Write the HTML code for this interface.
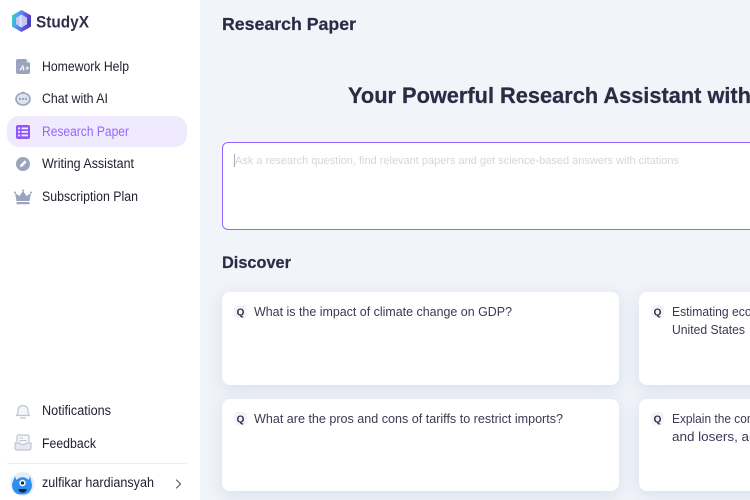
<!DOCTYPE html>
<html lang="en">
<head>
<meta charset="utf-8">
<title>StudyX Research Paper</title>
<style>
html,body{margin:0;padding:0;width:750px;height:500px;overflow:hidden;background:#f1f4f9}
body{position:relative;font-family:"Liberation Sans",sans-serif}
.side{position:absolute;left:0;top:0;width:200px;height:500px;background:#fff}
.pill{position:absolute;left:7px;top:116px;width:180px;height:31px;border-radius:12px;background:#efeafe}
.hr{position:absolute;left:7px;top:463px;width:180px;height:1px;background:#eeeeee}
.input{position:absolute;left:222px;top:142px;width:600px;height:86px;background:#fff;border:1px solid #9466ff;border-radius:6px}
.caret{position:absolute;left:234px;top:154px;width:1px;height:13px;background:#aaa}
.card{position:absolute;background:#fff;border-radius:8px;box-shadow:0 4px 16px rgba(180,192,215,.42)}
.chip{position:absolute;width:13px;height:13px;border-radius:4px;background:#f1f4f9}
svg.over{position:absolute;left:0;top:0}
</style>
</head>
<body>
<div class="side"></div>
<div class="pill"></div>
<div class="hr"></div>
<div class="input"></div>
<div class="caret"></div>
<div class="card" style="left:222px;top:292px;width:397px;height:93px"></div>
<div class="card" style="left:639px;top:292px;width:397px;height:93px"></div>
<div class="card" style="left:222px;top:399px;width:397px;height:92px"></div>
<div class="card" style="left:639px;top:399px;width:397px;height:92px"></div>
<div class="chip" style="left:234px;top:305px"></div>
<div class="chip" style="left:651px;top:305px"></div>
<div class="chip" style="left:234px;top:412px"></div>
<div class="chip" style="left:651px;top:412px"></div>

<svg class="over" width="750" height="500" viewBox="0 0 750 500" xmlns="http://www.w3.org/2000/svg" font-family="Liberation Sans, sans-serif">
<defs>
<linearGradient id="lg" x1="0" y1="0" x2="1" y2="0.3">
<stop offset="0" stop-color="#35e0b8"/><stop offset=".35" stop-color="#4aa4f0"/><stop offset=".7" stop-color="#6a5ce8"/><stop offset="1" stop-color="#4a3fc0"/>
</linearGradient>
</defs>

<!-- logo -->
<path d="M21.500 10l9.500 5.400v11.200l-9.500 5.400-9.500-5.400V15.400z" fill="url(#lg)"/>
<path d="M21.500 14.500l5.500 3.200v6.600l-5.500 3.200-5.500-3.200v-6.600z" fill="#c3c8f6"/>
<path d="M21.500 14.500v13l-2-1.200V15.700z" fill="#dfe3ff"/>
<text x="36" y="27.500" font-size="17" font-weight="700" fill="#2f2f4a" textLength="53" lengthAdjust="spacingAndGlyphs">StudyX</text>

<!-- Homework Help icon -->
<path d="M18 59h8l4 4v9a2 2 0 0 1-2 2H18a2 2 0 0 1-2-2V61a2 2 0 0 1 2-2z" fill="#9aa5bd"/>
<path d="M26.500 59l3.500 3.500h-3.500z" fill="#dfe3ec"/>
<text x="19.500" y="70.500" font-size="7.500" font-weight="700" font-style="italic" fill="#fff">A+</text>

<!-- Chat icon -->
<ellipse cx="23" cy="99" rx="7" ry="6" fill="#dde2ec" stroke="#9aa5bd" stroke-width="1.600"/>
<path d="M21.500 92.500h3" stroke="#9aa5bd" stroke-width="1.500"/>
<circle cx="20" cy="99" r="1" fill="#8a95ad"/><circle cx="23" cy="99" r="1" fill="#8a95ad"/><circle cx="26" cy="99" r="1" fill="#8a95ad"/>

<!-- Research icon -->
<rect x="16" y="125" width="14" height="14" rx="2" fill="#9155f7"/>
<g fill="#efeafe">
<rect x="18" y="127.500" width="2" height="1.800"/><rect x="21.500" y="127.500" width="6.500" height="1.800"/>
<rect x="18" y="131" width="2" height="1.800"/><rect x="21.500" y="131" width="6.500" height="1.800"/>
<rect x="18" y="134.500" width="2" height="1.800"/><rect x="21.500" y="134.500" width="6.500" height="1.800"/>
</g>

<!-- Writing icon -->
<circle cx="23" cy="164" r="7" fill="#9aa5bd"/>
<path d="M19.800 167.200l.7-2.600 4.200-4.200 1.900 1.900-4.200 4.200z" fill="#fff"/>

<!-- Crown icon -->
<path d="M15 193l4.500 3 3.500-5 3.500 5 4.500-3-1.500 8h-13z" fill="#9aa5bd"/>
<circle cx="15" cy="192.500" r="1" fill="#9aa5bd"/><circle cx="23" cy="190.500" r="1" fill="#9aa5bd"/><circle cx="31" cy="192.500" r="1" fill="#9aa5bd"/>
<rect x="16.500" y="202" width="13" height="2.200" rx=".6" fill="#9aa5bd"/>

<!-- Bell -->
<path d="M16.500 415.500c1.500-1.500 1.500-3 1.500-5a4.800 4.800 0 0 1 10 0c0 2 0 3.500 1.500 5z" fill="#f4f6fa" stroke="#bcc4d4" stroke-width="1.200" stroke-linejoin="round"/>
<path d="M20.500 418h5" stroke="#bcc4d4" stroke-width="1.300" stroke-linecap="round"/>

<!-- Feedback -->
<path d="M17 442v-5.500a1.500 1.500 0 0 1 1.500-1.500h9a1.500 1.500 0 0 1 1.500 1.500V442" fill="#f4f6fa" stroke="#bcc4d4" stroke-width="1.200"/>
<path d="M15 443h5l1 1.500h4l1-1.500h5v5a2 2 0 0 1-2 2H17a2 2 0 0 1-2-2z" fill="#e6e9f0" stroke="#bcc4d4" stroke-width="1.200" stroke-linejoin="round"/>
<path d="M19.500 438h3.500M19.500 440.500h7" stroke="#bcc4d4" stroke-width="1"/>

<!-- Avatar -->
<circle cx="22.500" cy="484" r="12" fill="#e3eef8"/>
<path d="M15 476.500l1.500 3.500a8 8 0 0 1 12 0l1.500-3.500 1.500 6a9.500 9.500 0 0 1-.8 7.500c-1.500 3-4 4.500-8.700 4.500s-7.200-1.500-8.700-4.500a9.500 9.500 0 0 1-.8-7.500z" fill="#2f8fef"/>
<circle cx="22.500" cy="483" r="3.200" fill="#fff"/>
<circle cx="22.500" cy="483" r="1.600" fill="#14243c"/>
<path d="M18.500 489h8c0 2.500-1.800 3.500-4 3.500s-4-1-4-3.500z" fill="#14243c"/>
<path d="M176.500 480l4 4-4 4" fill="none" stroke="#555a68" stroke-width="1.200" stroke-linecap="round" stroke-linejoin="round"/>

<!-- Sidebar text -->
<g font-size="13.500" fill="#1f1f2e">
<text x="42" y="71" textLength="87" lengthAdjust="spacingAndGlyphs">Homework Help</text>
<text x="42" y="103" textLength="66" lengthAdjust="spacingAndGlyphs">Chat with AI</text>
<text x="42" y="136" textLength="87" lengthAdjust="spacingAndGlyphs" fill="#9466ff">Research Paper</text>
<text x="42" y="168" textLength="92" lengthAdjust="spacingAndGlyphs">Writing Assistant</text>
<text x="42" y="201" textLength="96" lengthAdjust="spacingAndGlyphs">Subscription Plan</text>
<text x="42" y="415" textLength="69" lengthAdjust="spacingAndGlyphs">Notifications</text>
<text x="42" y="448" textLength="54" lengthAdjust="spacingAndGlyphs">Feedback</text>
<text x="42" y="487" textLength="112" lengthAdjust="spacingAndGlyphs">zulfikar hardiansyah</text>
</g>

<!-- Main text -->
<text x="222" y="30" font-size="17.500" font-weight="700" fill="#2b2b45" stroke="#2b2b45" stroke-width=".2" textLength="134" lengthAdjust="spacingAndGlyphs">Research Paper</text>
<text x="348" y="103" font-size="22.500" font-weight="700" fill="#2b2b45" stroke="#2b2b45" stroke-width=".25" textLength="403" lengthAdjust="spacingAndGlyphs">Your Powerful Research Assistant with</text>
<text x="235" y="164" font-size="11" fill="#d3d6de" textLength="444" lengthAdjust="spacingAndGlyphs">Ask a research question, find relevant papers and get science-based answers with citations</text>
<text x="222" y="268" font-size="16.500" font-weight="700" fill="#2b2b45" stroke="#2b2b45" stroke-width=".2" textLength="69" lengthAdjust="spacingAndGlyphs">Discover</text>

<!-- Q chips -->
<g font-size="10" font-weight="700" fill="#2b2b45" text-anchor="middle">
<text x="240.500" y="315.500">Q</text>
<text x="657.500" y="315.500">Q</text>
<text x="240.500" y="422.500">Q</text>
<text x="657.500" y="422.500">Q</text>
</g>

<!-- Card text -->
<g font-size="12.500" fill="#3a3a55">
<text x="254" y="316" textLength="258" lengthAdjust="spacingAndGlyphs">What is the impact of climate change on GDP?</text>
<text x="254" y="423" textLength="309" lengthAdjust="spacingAndGlyphs">What are the pros and cons of tariffs to restrict imports?</text>
<text x="672" y="316" textLength="112" lengthAdjust="spacingAndGlyphs">Estimating economic</text>
<text x="672" y="334" textLength="73" lengthAdjust="spacingAndGlyphs">United States</text>
<text x="672" y="423" textLength="104" lengthAdjust="spacingAndGlyphs">Explain the concept</text>
<text x="672" y="441" textLength="92" lengthAdjust="spacingAndGlyphs">and losers, and</text>
</g>
</svg>
</body>
</html>
